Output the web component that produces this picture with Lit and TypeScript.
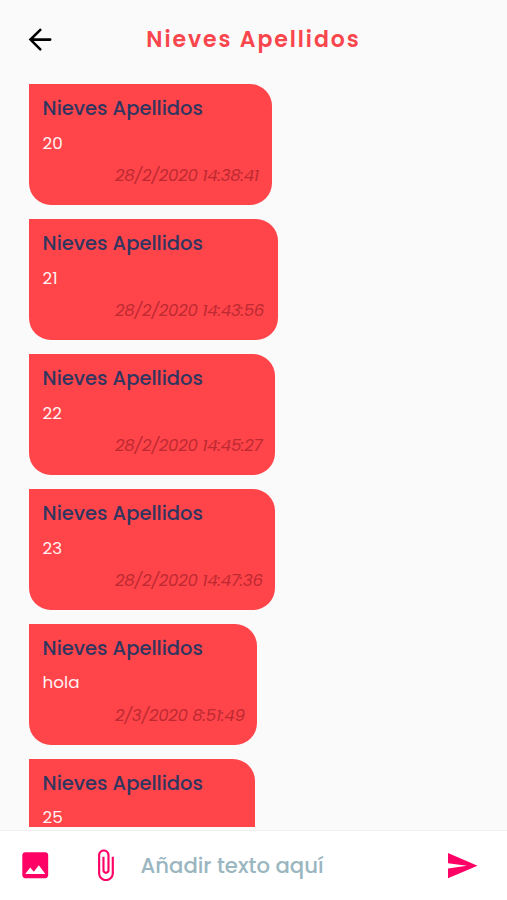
import { LitElement, html, css, nothing } from "lit";
import { customElement, property } from "lit/decorators.js";

interface Message {
  author: string;
  text: string;
  date?: string;
  width: number;
}

const author = "Nieves Apellidos";
const messages: Message[] = [
  { author, text: "20", date: "28/2/2020 14:38:41", width: 243.4 },
  { author, text: "21", date: "28/2/2020 14:43:56", width: 249 },
  { author, text: "22", date: "28/2/2020 14:45:27", width: 246 },
  { author, text: "23", date: "28/2/2020 14:47:36", width: 246 },
  { author, text: "hola", date: "2/3/2020 8:51:49", width: 228 },
  { author, text: "25", width: 226.5 },
];

@customElement("chat-bubble")
class ChatBubble extends LitElement {
  @property({ attribute: false }) message!: Message;

  static styles = css`
    :host { display: block; flex: none; }
    .bubble {
      box-sizing: border-box;
      height: 120.6px;
      padding: 12px 0 0 14px;
      background: #ff444a;
      border-radius: 0 22px 22px 22px;
      white-space: nowrap;
    }
    .author {
      font-size: 19.5px;
      line-height: 26px;
      font-weight: 500;
      color: #30365f;
    }
    .text {
      margin-top: 9.3px;
      font-size: 16.8px;
      line-height: 22px;
      font-weight: 400;
      color: #fff2f2;
    }
    .date {
      margin: 11.7px 0 0 72.3px;
      font-size: 16.6px;
      line-height: 22px;
      font-weight: 400;
      font-style: italic;
      letter-spacing: -0.28px;
      color: #be2a31;
    }
  `;

  render() {
    const m = this.message;
    return html`
      <div class="bubble" style="width:${m.width}px">
        <div class="author">${m.author}</div>
        <div class="text">${m.text}</div>
        ${m.date ? html`<div class="date">${m.date}</div>` : nothing}
      </div>
    `;
  }
}

@customElement("app-root")
class AppRoot extends LitElement {
  static styles = css`
    :host {
      display: flex;
      flex-direction: column;
      height: 900px;
      overflow: hidden;
      background: #fafafa;
      font-family: Poppins, Inter, "Liberation Sans", sans-serif;
    }
    .header {
      flex: none;
      display: grid;
      grid-template-columns: 80px 1fr 80px;
      align-items: center;
      height: 79px;
    }
    .back { margin-left: 26px; display: block; }
    .title {
      margin: 0;
      text-align: center;
      font-size: 22px;
      font-weight: 600;
      letter-spacing: 1.93px;
      color: #f9464d;
      white-space: nowrap;
    }
    .list {
      flex: none;
      box-sizing: border-box;
      height: 748px;
      padding: 5.4px 0 0 28.6px;
      display: flex;
      flex-direction: column;
      gap: 14.35px;
      overflow: hidden;
    }
    .composer {
      flex: 1;
      margin-top: 3px;
      box-sizing: border-box;
      border-top: 1px solid #f0f0f0;
      background: #fff;
      display: flex;
      align-items: center;
      color: #ff0266;
    }
    svg { display: block; flex: none; fill: currentColor; }
    .image { margin-left: 17.5px; }
    .clip { margin-left: 36px; }
    .field {
      flex: 1;
      margin-left: 18px;
      font-size: 21.2px;
      font-weight: 500;
      color: #9ab6c0;
      white-space: nowrap;
    }
    .send { margin-right: 28px; }
  `;

  render() {
    return html`
      <header class="header">
        <svg class="back" width="28" height="28" viewBox="0 0 28 28">
          <path d="M24.200 13.600H4.500M14.300 3.900L4.500 13.600L14.300 23.300" fill="none" stroke="#000" stroke-width="2.600" stroke-linecap="round" />
        </svg>
        <h1 class="title">${author}</h1>
      </header>
      <main class="list">
        ${messages.map((m) => html`<chat-bubble .message=${m}></chat-bubble>`)}
      </main>
      <footer class="composer">
        <svg class="image" width="34.5" height="34.5" viewBox="0 0 24 24">
          <path d="M21 19V5c0-1.100-.9-2-2-2H5c-1.100 0-2 .9-2 2v14c0 1.100.9 2 2 2h14c1.100 0 2-.9 2-2zM8.500 13.500l2.500 3.010L14.500 12l4.500 6H5l3.500-4.500z" />
        </svg>
        <svg class="clip" width="34.5" height="34.5" viewBox="0 0 24 24">
          <path d="M16.500 6v11.500c0 2.210-1.790 4-4 4s-4-1.790-4-4V5c0-1.380 1.120-2.500 2.500-2.500s2.500 1.120 2.500 2.500v10.500c0 .55-.45 1-1 1s-1-.45-1-1V6H10v9.500c0 1.380 1.120 2.500 2.500 2.500s2.500-1.120 2.500-2.500V5c0-2.210-1.790-4-4-4S7 2.790 7 5v12.500c0 3.040 2.460 5.500 5.500 5.500s5.500-2.460 5.500-5.500V6h-1.500z" />
        </svg>
        <div class="field">Añadir texto aquí</div>
        <svg class="send" width="34" height="34" viewBox="0 0 34 34">
          <path d="M3 4L32.500 16.700L3 29.300V19.400L22 16.700L3 14.200Z" />
        </svg>
      </footer>
    `;
  }
}
